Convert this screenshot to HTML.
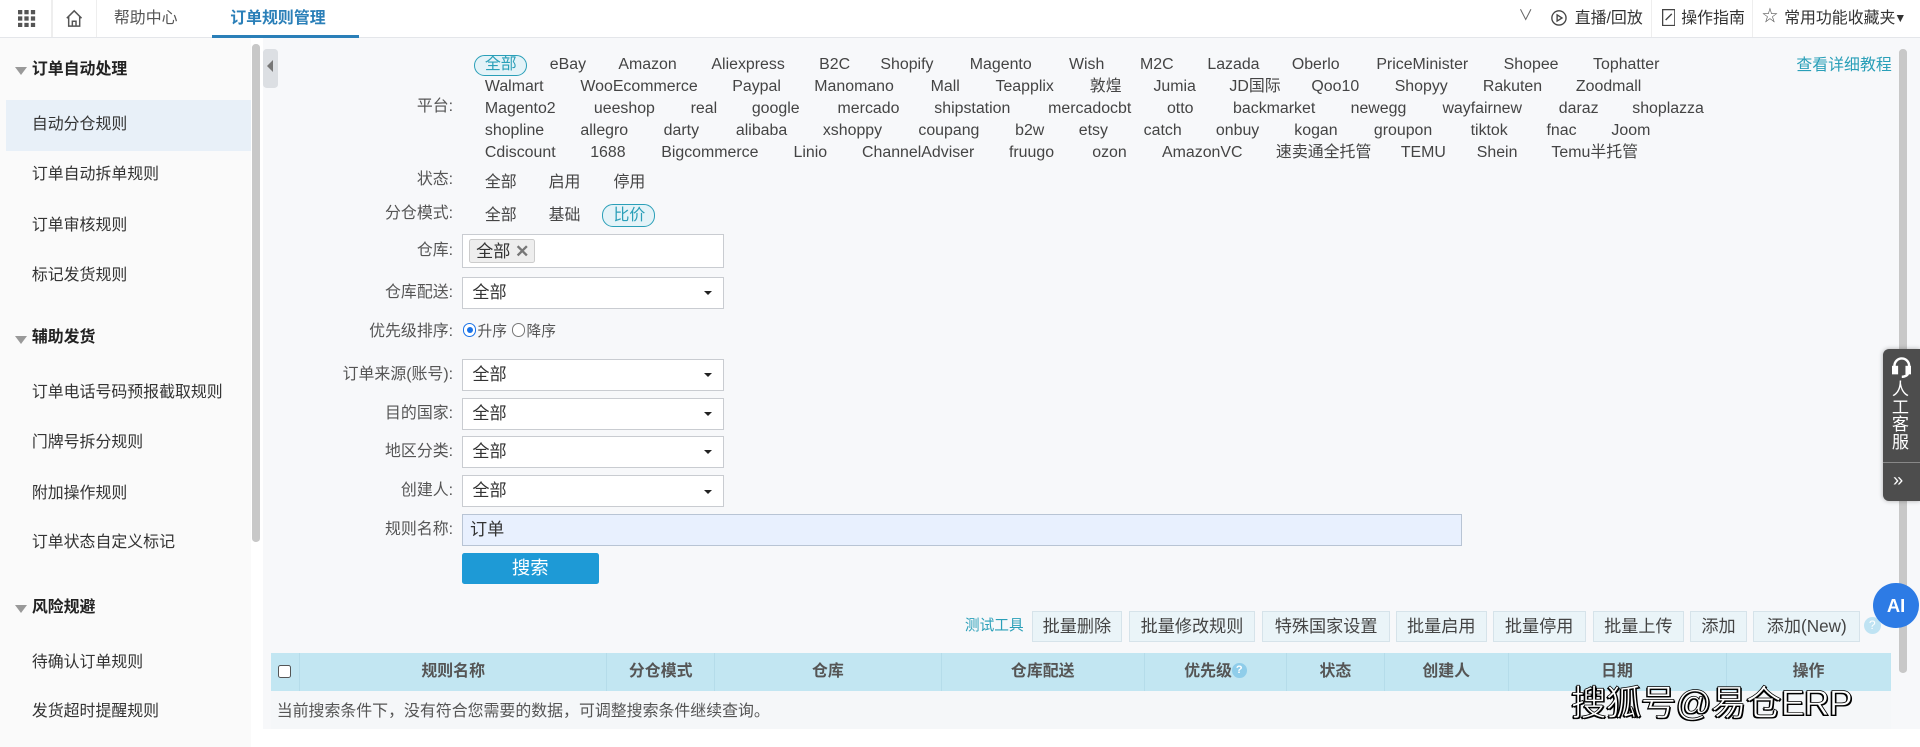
<!DOCTYPE html>
<html><head><meta charset="utf-8">
<style>
html{zoom:1.2244898}
*{box-sizing:border-box;margin:0;padding:0}
body{width:1568px;height:610px;overflow:hidden;position:relative;background:#fff;font-family:"Liberation Sans","Noto Sans CJK SC",sans-serif;font-size:13px;color:#333;line-height:16px}
.a{position:absolute;white-space:nowrap}
.top{position:absolute;left:0;top:0;width:1568px;height:31px;background:#fff;border-bottom:1px solid #e4e6ea}
.side{position:absolute;left:0;top:31px;width:205px;height:579px;background:#fafafa}
.main{position:absolute;left:215px;top:31px;width:1353px;height:564px;background:#f7f8fa}
.grp{font-weight:bold;font-size:13px;color:#222}
.tri{position:absolute;width:0;height:0;border-left:5px solid transparent;border-right:5px solid transparent;border-top:7px solid #999}
.lab{position:absolute;text-align:right;width:120px;left:250px;color:#555}
.pl{position:absolute;color:#444;line-height:16px;white-space:nowrap}
.sel{position:absolute;left:377px;width:214px;height:26px;background:#fff;border:1px solid #c9ccd1;padding-left:8px;line-height:24px;font-size:14px}
.sel:after{content:"";position:absolute;right:9px;top:11px;border-left:3.5px solid transparent;border-right:3.5px solid transparent;border-top:4px solid #222}
.btn{position:absolute;top:499px;height:25px;background:#eaf4f8;border:1px solid #d6e3ea;line-height:23px;text-align:center;font-size:14px;color:#444}
.th{position:absolute;top:533px;height:31px;line-height:31px;text-align:center;font-weight:bold;color:#555;border-right:1px solid #b5dcea}
</style></head><body>
<div class="top">
  <svg class="a" style="left:15px;top:8px" width="14" height="14" viewBox="0 0 14 14" fill="#555"><rect x="0" y="0" width="3.5" height="3.5"/><rect x="5.2" y="0" width="3.5" height="3.5"/><rect x="10.5" y="0" width="3.5" height="3.5"/><rect x="0" y="5.2" width="3.5" height="3.5"/><rect x="5.2" y="5.2" width="3.5" height="3.5"/><rect x="10.5" y="5.2" width="3.5" height="3.5"/><rect x="0" y="10.5" width="3.5" height="3.5"/><rect x="5.2" y="10.5" width="3.5" height="3.5"/><rect x="10.5" y="10.5" width="3.5" height="3.5"/></svg>
  <div class="a" style="left:42px;top:0;width:1px;height:30px;background:#eee"></div>
  <svg class="a" style="left:53px;top:7px" width="15" height="15" viewBox="0 0 15 15" fill="none" stroke="#555" stroke-width="1.2"><path d="M1.5 7.5L7.5 1.5L13.5 7.5M3 6v8h9V6M6 14v-4h3v4"/></svg>
  <div class="a" style="left:78px;top:0;width:1px;height:30px;background:#eee"></div>
  <div class="a" style="left:93px;top:7px;color:#555">帮助中心</div>
  <div class="a" style="left:173px;top:0;width:120px;height:31px;border-bottom:3px solid #2a7fb8"></div>
  <div class="a" style="left:188px;top:7px;color:#2a7fb8;font-weight:bold">订单规则管理</div>
  <div class="a" style="left:1240px;top:6px;color:#666;font-size:12px">∨</div>
  <svg class="a" style="left:1267px;top:8px" width="13" height="13" viewBox="0 0 13 13" fill="none" stroke="#444" stroke-width="1.1"><circle cx="6.5" cy="6.5" r="5.8"/><path d="M5 4v5l4-2.5z"/></svg>
  <div class="a" style="left:1286px;top:7px;color:#333">直播/回放</div>
  <div class="a" style="left:1348px;top:0;width:1px;height:30px;background:#eee"></div>
  <svg class="a" style="left:1357px;top:7px" width="11" height="14" viewBox="0 0 11 14" fill="none" stroke="#444" stroke-width="1.1"><rect x="0.5" y="0.5" width="10" height="13"/><path d="M3 9l5-5"/></svg>
  <div class="a" style="left:1373px;top:7px;color:#333">操作指南</div>
  <div class="a" style="left:1431px;top:0;width:1px;height:30px;background:#eee"></div>
  <div class="a" style="left:1439px;top:6px;color:#555;font-size:13px">☆</div>
  <div class="a" style="left:1457px;top:7px;color:#333">常用功能收藏夹</div>
  <div class="a" style="left:1547px;top:7px;color:#333;font-size:10px">▼</div>
</div>

<div class="side">
  <div class="tri" style="left:12px;top:24px"></div><div class="a grp" style="left:26px;top:18px">订单自动处理</div>
  <div class="a" style="left:5px;top:51px;width:200px;height:41px;background:#e8f0f8"></div>
  <div class="a" style="left:26px;top:63px">自动分仓规则</div>
  <div class="a" style="left:26px;top:104px">订单自动拆单规则</div>
  <div class="a" style="left:26px;top:145px">订单审核规则</div>
  <div class="a" style="left:26px;top:186px">标记发货规则</div>
  <div class="tri" style="left:12px;top:243px"></div><div class="a grp" style="left:26px;top:237px">辅助发货</div>
  <div class="a" style="left:26px;top:282px">订单电话号码预报截取规则</div>
  <div class="a" style="left:26px;top:323px">门牌号拆分规则</div>
  <div class="a" style="left:26px;top:364px">附加操作规则</div>
  <div class="a" style="left:26px;top:404px">订单状态自定义标记</div>
  <div class="tri" style="left:12px;top:463px"></div><div class="a grp" style="left:26px;top:457px">风险规避</div>
  <div class="a" style="left:26px;top:502px">待确认订单规则</div>
  <div class="a" style="left:26px;top:542px">发货超时提醒规则</div>
</div>
<div class="a" style="left:205px;top:31px;width:10px;height:579px;background:#fff"></div>
<div class="a" style="left:206px;top:36px;width:6px;height:407px;background:#c8c8c8;border-radius:3px"></div>

<div class="main"></div>
<div class="a" style="left:215px;top:40px;width:12px;height:32px;background:#dcdfe3;border-radius:3px"></div>
<div class="a" style="left:218px;top:49px;border-top:5px solid transparent;border-bottom:5px solid transparent;border-right:5px solid #777"></div>
<div class="a" style="left:1551px;top:40px;width:6px;height:510px;background:#c8c8c8;border-radius:3px"></div>

<div class="lab" style="top:79px">平台:</div>
<div class="a" style="left:387px;top:45px;width:43px;height:17px;border:1px solid #2a9fb8;border-radius:9px;background:#e4f3f8"></div>
<div class="pl" style="left:396px;top:45px;color:#2a9fb8">全部</div>
<div class="pl" style="left:449px;top:45px">eBay</div><div class="pl" style="left:505px;top:45px">Amazon</div><div class="pl" style="left:581px;top:45px">Aliexpress</div><div class="pl" style="left:669px;top:45px">B2C</div><div class="pl" style="left:719px;top:45px">Shopify</div><div class="pl" style="left:792px;top:45px">Magento</div><div class="pl" style="left:873px;top:45px">Wish</div><div class="pl" style="left:931px;top:45px">M2C</div><div class="pl" style="left:986px;top:45px">Lazada</div><div class="pl" style="left:1055px;top:45px">Oberlo</div><div class="pl" style="left:1124px;top:45px">PriceMinister</div><div class="pl" style="left:1228px;top:45px">Shopee</div><div class="pl" style="left:1301px;top:45px">Tophatter</div>
<div class="pl" style="left:396px;top:63px">Walmart</div><div class="pl" style="left:474px;top:63px">WooEcommerce</div><div class="pl" style="left:598px;top:63px">Paypal</div><div class="pl" style="left:665px;top:63px">Manomano</div><div class="pl" style="left:760px;top:63px">Mall</div><div class="pl" style="left:813px;top:63px">Teapplix</div><div class="pl" style="left:890px;top:63px">敦煌</div><div class="pl" style="left:942px;top:63px">Jumia</div><div class="pl" style="left:1004px;top:63px">JD国际</div><div class="pl" style="left:1071px;top:63px">Qoo10</div><div class="pl" style="left:1139px;top:63px">Shopyy</div><div class="pl" style="left:1211px;top:63px">Rakuten</div><div class="pl" style="left:1287px;top:63px">Zoodmall</div>
<div class="pl" style="left:396px;top:81px">Magento2</div><div class="pl" style="left:485px;top:81px">ueeshop</div><div class="pl" style="left:564px;top:81px">real</div><div class="pl" style="left:614px;top:81px">google</div><div class="pl" style="left:684px;top:81px">mercado</div><div class="pl" style="left:763px;top:81px">shipstation</div><div class="pl" style="left:856px;top:81px">mercadocbt</div><div class="pl" style="left:953px;top:81px">otto</div><div class="pl" style="left:1007px;top:81px">backmarket</div><div class="pl" style="left:1103px;top:81px">newegg</div><div class="pl" style="left:1178px;top:81px">wayfairnew</div><div class="pl" style="left:1273px;top:81px">daraz</div><div class="pl" style="left:1333px;top:81px">shoplazza</div>
<div class="pl" style="left:396px;top:99px">shopline</div><div class="pl" style="left:474px;top:99px">allegro</div><div class="pl" style="left:542px;top:99px">darty</div><div class="pl" style="left:601px;top:99px">alibaba</div><div class="pl" style="left:672px;top:99px">xshoppy</div><div class="pl" style="left:750px;top:99px">coupang</div><div class="pl" style="left:829px;top:99px">b2w</div><div class="pl" style="left:881px;top:99px">etsy</div><div class="pl" style="left:934px;top:99px">catch</div><div class="pl" style="left:993px;top:99px">onbuy</div><div class="pl" style="left:1057px;top:99px">kogan</div><div class="pl" style="left:1122px;top:99px">groupon</div><div class="pl" style="left:1201px;top:99px">tiktok</div><div class="pl" style="left:1263px;top:99px">fnac</div><div class="pl" style="left:1316px;top:99px">Joom</div>
<div class="pl" style="left:396px;top:117px">Cdiscount</div><div class="pl" style="left:482px;top:117px">1688</div><div class="pl" style="left:540px;top:117px">Bigcommerce</div><div class="pl" style="left:648px;top:117px">Linio</div><div class="pl" style="left:704px;top:117px">ChannelAdviser</div><div class="pl" style="left:824px;top:117px">fruugo</div><div class="pl" style="left:892px;top:117px">ozon</div><div class="pl" style="left:949px;top:117px">AmazonVC</div><div class="pl" style="left:1042px;top:117px">速卖通全托管</div><div class="pl" style="left:1144px;top:117px">TEMU</div><div class="pl" style="left:1206px;top:117px">Shein</div><div class="pl" style="left:1267px;top:117px">Temu半托管</div>
<div class="a" style="left:1467px;top:46px;color:#2a9fb8">查看详细教程</div>

<div class="lab" style="top:139px">状态:</div>
<div class="pl" style="left:396px;top:141px">全部</div><div class="pl" style="left:448px;top:141px">启用</div><div class="pl" style="left:501px;top:141px">停用</div>
<div class="lab" style="top:167px">分仓模式:</div>
<div class="pl" style="left:396px;top:168px">全部</div><div class="pl" style="left:448px;top:168px">基础</div>
<div class="a" style="left:492px;top:167px;width:43px;height:18px;border:1px solid #2a9fb8;border-radius:9px;background:#e4f3f8"></div>
<div class="pl" style="left:501px;top:168px;color:#2a9fb8">比价</div>

<div class="lab" style="top:197px">仓库:</div>
<div class="a" style="left:377px;top:191px;width:214px;height:28px;background:#fff;border:1px solid #c9ccd1"></div>
<div class="a" style="left:383px;top:195px;width:54px;height:20px;background:#eee;border:1px solid #ccc;border-radius:2px;line-height:18px;padding-left:5px;font-size:14px">全部 <span style="color:#777;font-weight:bold">✕</span></div>
<div class="lab" style="top:231px">仓库配送:</div><div class="sel" style="top:226px">全部</div>
<div class="lab" style="top:263px">优先级排序:</div>
<div class="a" style="left:378px;top:264px;width:11px;height:11px;border-radius:50%;border:1px solid #1a73e8;background:#fff"></div>
<div class="a" style="left:381px;top:267px;width:5px;height:5px;border-radius:50%;background:#1a73e8"></div>
<div class="a" style="left:390px;top:264px;font-size:12px;color:#555">升序</div>
<div class="a" style="left:418px;top:264px;width:11px;height:11px;border-radius:50%;border:1px solid #777;background:#fff"></div>
<div class="a" style="left:430px;top:264px;font-size:12px;color:#555">降序</div>
<div class="lab" style="top:298px">订单来源(账号):</div><div class="sel" style="top:293px">全部</div>
<div class="lab" style="top:330px">目的国家:</div><div class="sel" style="top:325px">全部</div>
<div class="lab" style="top:361px">地区分类:</div><div class="sel" style="top:356px">全部</div>
<div class="lab" style="top:393px">创建人:</div><div class="sel" style="top:388px">全部</div>
<div class="lab" style="top:425px">规则名称:</div>
<div class="a" style="left:377px;top:420px;width:817px;height:26px;background:#e8f0fe;border:1px solid #b8c4d4;line-height:24px;padding-left:6px;font-size:14px">订单</div>
<div class="a" style="left:377px;top:452px;width:112px;height:25px;background:#1e9ad6;color:#fff;text-align:center;line-height:25px;font-size:15px;border-radius:2px">搜索</div>

<div class="a" style="left:788px;top:504px;color:#2a9fb8;font-size:12px">测试工具</div>
<div class="btn" style="left:843px;width:73px">批量删除</div>
<div class="btn" style="left:922px;width:103px">批量修改规则</div>
<div class="btn" style="left:1031px;width:104px">特殊国家设置</div>
<div class="btn" style="left:1140px;width:74px">批量启用</div>
<div class="btn" style="left:1219px;width:76px">批量停用</div>
<div class="btn" style="left:1301px;width:74px">批量上传</div>
<div class="btn" style="left:1380px;width:47px">添加</div>
<div class="btn" style="left:1432px;width:87px">添加(New)</div>
<div class="a" style="left:1522px;top:504px;width:14px;height:14px;border-radius:50%;background:#bfe3f3;color:#fff;font-size:10px;text-align:center;line-height:14px">?</div>

<div class="a" style="left:221px;top:533px;width:1323px;height:31px;background:#c2e6f2"></div>
<div class="a" style="left:227px;top:543px;width:11px;height:11px;border:1px solid #555;background:#fff;border-radius:2px"></div>
<div class="th" style="left:221px;width:24px"></div>
<div class="th" style="left:245px;width:251px">规则名称</div>
<div class="th" style="left:496px;width:88px">分仓模式</div>
<div class="th" style="left:584px;width:185px">仓库</div>
<div class="th" style="left:769px;width:166px">仓库配送</div>
<div class="th" style="left:935px;width:116px">优先级<span style="display:inline-block;width:12px;height:12px;border-radius:50%;background:#8fcdea;color:#fff;font-size:9px;line-height:12px;vertical-align:2px">?</span></div>
<div class="th" style="left:1051px;width:80px">状态</div>
<div class="th" style="left:1131px;width:101px">创建人</div>
<div class="th" style="left:1232px;width:178px">日期</div>
<div class="th" style="left:1410px;width:134px;border-right:none">操作</div>
<div class="a" style="left:221px;top:564px;width:1323px;height:31px;background:#f5f7f9"></div>
<div class="a" style="left:226px;top:573px;color:#555">当前搜索条件下，没有符合您需要的数据，可调整搜索条件继续查询。</div>

<div class="a" style="left:1538px;top:285px;width:30px;height:124px;background:#4d4d4d;border-radius:5px 0 0 5px;box-shadow:0 0 4px rgba(0,0,0,.3)"></div>
<svg class="a" style="left:1545px;top:291px" width="16" height="18" viewBox="0 0 16 18" fill="none" stroke="#fff" stroke-width="2"><path d="M2 10V8a6 6 0 0 1 12 0v2"/><rect x="1" y="9" width="3" height="5" fill="#fff"/><rect x="12" y="9" width="3" height="5" fill="#fff"/><path d="M13 14c0 2-3 3-5 3"/></svg>
<div class="a" style="left:1545px;top:311px;color:#fff;font-size:14px;line-height:14.5px;white-space:normal;width:16px">人工客服</div>
<div class="a" style="left:1538px;top:377px;width:30px;height:1px;background:#888"></div>
<div class="a" style="left:1546px;top:384px;color:#fff;font-size:15px">»</div>
<div class="a" style="left:1530px;top:476px;width:37px;height:37px;border-radius:50%;background:#2d7be5;color:#fff;font-weight:bold;font-size:15px;text-align:center;line-height:37px">AI</div>

<div class="a" style="left:1283px;top:558px;font-size:29px;line-height:34px;color:#fff;-webkit-text-stroke:0.6px #000;text-shadow:1px 1px 0 #000,-1px 1px 0 #000;letter-spacing:-0.5px">搜狐号@易仓ERP</div>
</body></html>
